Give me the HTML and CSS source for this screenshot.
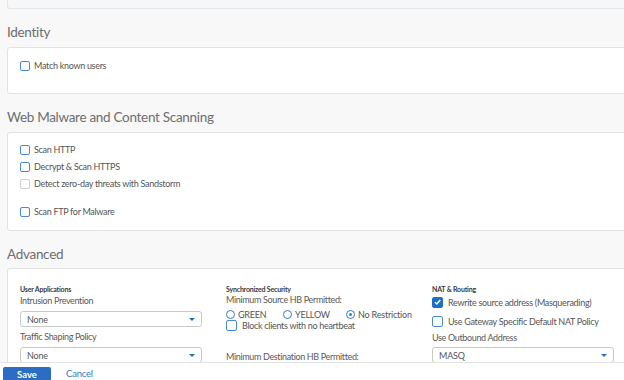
FILE: index.html
```html
<!DOCTYPE html>
<html>
<head>
<meta charset="utf-8">
<link rel="stylesheet" href="styles.css">
</head>
<body>
<div class="page">
  <div class="card top-card"></div>

  <h2 class="section-title">Identity</h2>
  <div class="card identity-card">
    <label class="check"><span class="box"></span>Match known users</label>
  </div>

  <h2 class="section-title">Web Malware and Content Scanning</h2>
  <div class="card scan-card">
    <label class="check"><span class="box"></span>Scan HTTP</label>
    <label class="check"><span class="box"></span>Decrypt &amp; Scan HTTPS</label>
    <label class="check disabled"><span class="box"></span>Detect zero-day threats with Sandstorm</label>
    <label class="check gap-top"><span class="box"></span>Scan FTP for Malware</label>
  </div>

  <h2 class="section-title adv">Advanced</h2>
  <div class="card advanced-card">
    <div class="col">
      <div class="group-title">User Applications</div>
      <div class="field-label">Intrusion Prevention</div>
      <div class="select"><span>None</span><span class="caret"></span></div>
      <div class="field-label">Traffic Shaping Policy</div>
      <div class="select"><span>None</span><span class="caret"></span></div>
    </div>
    <div class="col">
      <div class="group-title">Synchronized Security</div>
      <div class="field-label tight">Minimum Source HB Permitted:</div>
      <div class="radios">
        <label class="radio r-green"><span class="circle"></span>GREEN</label>
        <label class="radio r-yellow"><span class="circle"></span>YELLOW</label>
        <label class="radio"><span class="circle on"></span>No Restriction</label>
      </div>
      <label class="check big hb"><span class="box"></span>Block clients with no heartbeat</label>
      <div class="field-label dest">Minimum Destination HB Permitted:</div>
    </div>
    <div class="col">
      <div class="group-title">NAT &amp; Routing</div>
      <label class="check big nat1"><span class="box checked"><svg viewBox="0 0 10 10" width="10" height="10"><path d="M2.2 5.2 L4.3 7.2 L8 2.9" fill="none" stroke="#fff" stroke-width="1.7"/></svg></span>Rewrite source address (Masquerading)</label>
      <label class="check big nat2"><span class="box"></span>Use Gateway Specific Default NAT Policy</label>
      <div class="field-label out">Use Outbound Address</div>
      <div class="select"><span>MASQ</span><span class="caret"></span></div>
    </div>
  </div>
</div>

<div class="footer">
  <button class="btn-save">Save</button>
  <span class="btn-cancel">Cancel</span>
</div>
</body>
</html>
```

FILE: styles.css
```css
html, body {
  margin: 0;
  padding: 0;
}
body {
  background: #f8f8f8;
  font-family: Lato, "Liberation Sans", sans-serif;
  color: #555;
  overflow: hidden;
  height: 380px;
}
.page {
  padding-left: 7px;
  margin-right: -10px;
}
.card {
  background: #fff;
  border: 1px solid #e2e2e2;
  border-radius: 3px;
}
.top-card {
  height: 13px;
  margin-top: -4px;
  background: #f5f7f9;
  border-top: none;
  border-color: #e6e6e6;
  box-sizing: border-box;
}
.section-title {
  margin: 13px 0 5px 0;
  font-size: 13.5px;
  letter-spacing: -0.3px;
  font-weight: 400;
  line-height: 20px;
  color: #6e6e6e;
}
.section-title.adv {
  margin-bottom: 4px;
}
.identity-card {
  height: 45px;
  padding: 0 12px;
}
.identity-card .check {
  margin-top: 9px;
}
.scan-card {
  padding: 8px 12px 10px;
}
.check {
  display: flex;
  align-items: center;
  height: 17px;
  font-size: 9px;
  letter-spacing: -0.3px;
  color: #555;
  white-space: nowrap;
}
.check .box {
  width: 8px;
  height: 8px;
  border: 1.2px solid #4a8ad4;
  border-radius: 2px;
  margin-right: 4px;
  flex: none;
  display: flex;
  align-items: center;
  justify-content: center;
}
.check.disabled .box {
  border-color: #cfcfcf;
}
.check.gap-top {
  margin-top: 11px;
}
.box.checked {
  background: #1e6fc8;
  border-color: #1e6fc8;
}
.advanced-card {
  padding: 15px 12px 0;
  display: grid;
  grid-template-columns: 182px 182px 182px;
  column-gap: 24px;
  align-items: start;
  height: 120px;
}
.group-title {
  font-size: 7px;
  font-weight: 700;
  letter-spacing: -0.2px;
  color: #3a3a3a;
  line-height: 10px;
}
.field-label {
  font-size: 9px;
  letter-spacing: -0.35px;
  line-height: 14px;
  margin-bottom: 3px;
  color: #5a5a5a;
  white-space: nowrap;
}
.field-label.tight {
  margin-bottom: 2px;
  line-height: 12px;
}
.field-label.dest {
  margin-top: 19px;
}
.select {
  height: 14px;
  border: 1px solid #c9c9c9;
  border-radius: 3px;
  display: flex;
  align-items: center;
  justify-content: space-between;
  padding: 0 6px;
  font-size: 9px;
  letter-spacing: -0.2px;
  color: #555;
  margin-bottom: 3px;
}
.caret {
  width: 0;
  height: 0;
  border-left: 3px solid transparent;
  border-right: 3px solid transparent;
  border-top: 3px solid #1e6fc8;
}
.radios {
  display: flex;
  height: 12px;
  align-items: center;
  font-size: 9px;
  letter-spacing: -0.2px;
  white-space: nowrap;
}
.radio {
  display: flex;
  align-items: center;
  color: #555;
  flex: none;
}
.r-green { width: 57px; }
.r-yellow { width: 63px; }
.circle {
  width: 7px;
  height: 7px;
  border: 1.5px solid #2f7bd0;
  border-radius: 50%;
  margin-right: 3px;
  display: flex;
  align-items: center;
  justify-content: center;
  flex: none;
}
.circle.on::after {
  content: "";
  width: 3px;
  height: 3px;
  border-radius: 50%;
  background: #2f7bd0;
}
.check.big {
  font-size: 9px;
  height: 16px;
}
.check.big .box {
  width: 9px;
  height: 9px;
  margin-right: 5px;
}
.check.hb {
  height: 11px;
}
.nat1 { margin-top: 0; }
.nat2 { margin-top: 3px; }
.field-label.out { margin-top: 2px; margin-bottom: 2px; }
.footer {
  position: fixed;
  left: 0;
  right: 0;
  bottom: 0;
  height: 17px;
  background: #fff;
  border-top: 1px solid #e3e3e3;
  display: flex;
  align-items: flex-start;
}
.btn-save {
  margin: 4px 0 0 3px;
  width: 48px;
  height: 16px;
  background: #2b6dc2;
  border: none;
  border-radius: 2px 2px 0 0;
  color: #fff;
  font-family: Lato, "Liberation Sans", sans-serif;
  font-size: 9.5px;
  font-weight: 700;
  padding: 0;
  line-height: 14px;
}
.btn-cancel {
  margin: 5px 0 0 15px;
  font-size: 9.5px;
  letter-spacing: -0.2px;
  color: #3a78c2;
  line-height: 12px;
}
```
